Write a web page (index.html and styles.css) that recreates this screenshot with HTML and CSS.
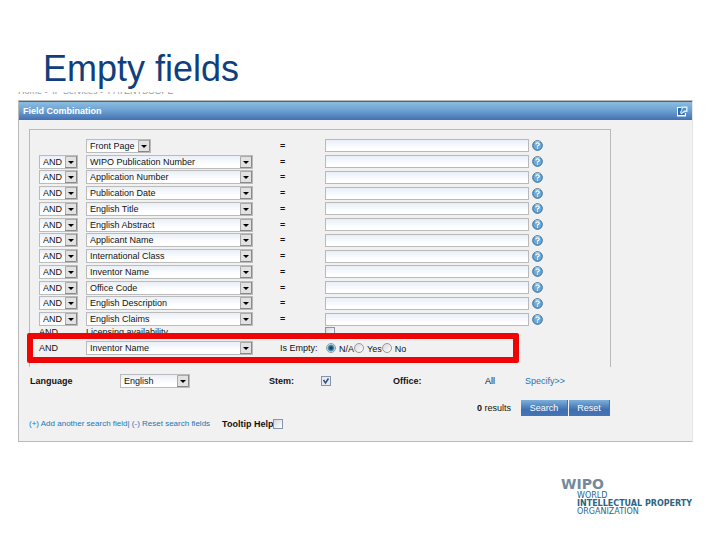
FILE: index.html
```
<!DOCTYPE html>
<html lang="en">
<head>
    <meta charset="utf-8">
    <title>Empty fields</title>
    <link rel="stylesheet" href="styles.css">
</head>
<body>
    <svg width="0" height="0" class="symbols">
        <symbol id="help" viewBox="0 0 11 11">
            <circle cx="5.5" cy="5.5" r="4.8" fill="#6aa9dc" stroke="#34658f"/>
            <path d="M3 2Q5.5 0.8 8 2" stroke="#a9cdec" fill="none"/>
            <path d="M3.7 4.3Q4 2.8 5.5 2.8T7.3 4.2Q7.3 5.2 5.5 6V6.8M5.5 7.6V8.8" stroke="#fff" stroke-width="1.2" fill="none"/>
        </symbol>
    </svg>

    <h1>Empty fields</h1>
    <div class="breadcrumb"><span>Home &gt; IP Services &gt; PATENTSCOPE</span></div>

    <form class="panel">
        <div class="panel-head">
            <h2>Field Combination</h2>
            <svg width="12" height="11" viewBox="0 0 12 11">
                <path d="M1 1H5V2H2V9H9V7H10V10.5H1Z" fill="#fff"/>
                <path d="M2 2H5V5H8V9H2Z" fill="#2f6ca8"/>
                <path d="M5 0.5H11.5V6H9L5 8.5L4 6L6 3Z" fill="#d9ecf8"/>
                <path d="M7 2H10V4.5H8L5.5 7L5.5 5.5Z" fill="#4b93c6"/>
            </svg>
        </div>

        <div class="fields">
            <div class="rows">
                <div class="row">
                    <span></span>
                    <select class="page" aria-label="Field 1"><option>Front Page</option></select>
                    <b>=</b>
                    <input type="text" aria-label="Value 1">
                    <svg class="help"><use href="#help"/></svg>
                </div>
                <div class="row">
                    <select class="op" aria-label="Operator 2"><option>AND</option></select>
                    <select class="field" aria-label="Field 2"><option>WIPO Publication Number</option></select>
                    <b>=</b>
                    <input type="text" aria-label="Value 2">
                    <svg class="help"><use href="#help"/></svg>
                </div>
                <div class="row">
                    <select class="op" aria-label="Operator 3"><option>AND</option></select>
                    <select class="field" aria-label="Field 3"><option>Application Number</option></select>
                    <b>=</b>
                    <input type="text" aria-label="Value 3">
                    <svg class="help"><use href="#help"/></svg>
                </div>
                <div class="row">
                    <select class="op" aria-label="Operator 4"><option>AND</option></select>
                    <select class="field" aria-label="Field 4"><option>Publication Date</option></select>
                    <b>=</b>
                    <input type="text" aria-label="Value 4">
                    <svg class="help"><use href="#help"/></svg>
                </div>
                <div class="row">
                    <select class="op" aria-label="Operator 5"><option>AND</option></select>
                    <select class="field" aria-label="Field 5"><option>English Title</option></select>
                    <b>=</b>
                    <input type="text" aria-label="Value 5">
                    <svg class="help"><use href="#help"/></svg>
                </div>
                <div class="row">
                    <select class="op" aria-label="Operator 6"><option>AND</option></select>
                    <select class="field" aria-label="Field 6"><option>English Abstract</option></select>
                    <b>=</b>
                    <input type="text" aria-label="Value 6">
                    <svg class="help"><use href="#help"/></svg>
                </div>
                <div class="row">
                    <select class="op" aria-label="Operator 7"><option>AND</option></select>
                    <select class="field" aria-label="Field 7"><option>Applicant Name</option></select>
                    <b>=</b>
                    <input type="text" aria-label="Value 7">
                    <svg class="help"><use href="#help"/></svg>
                </div>
                <div class="row">
                    <select class="op" aria-label="Operator 8"><option>AND</option></select>
                    <select class="field" aria-label="Field 8"><option>International Class</option></select>
                    <b>=</b>
                    <input type="text" aria-label="Value 8">
                    <svg class="help"><use href="#help"/></svg>
                </div>
                <div class="row">
                    <select class="op" aria-label="Operator 9"><option>AND</option></select>
                    <select class="field" aria-label="Field 9"><option>Inventor Name</option></select>
                    <b>=</b>
                    <input type="text" aria-label="Value 9">
                    <svg class="help"><use href="#help"/></svg>
                </div>
                <div class="row">
                    <select class="op" aria-label="Operator 10"><option>AND</option></select>
                    <select class="field" aria-label="Field 10"><option>Office Code</option></select>
                    <b>=</b>
                    <input type="text" aria-label="Value 10">
                    <svg class="help"><use href="#help"/></svg>
                </div>
                <div class="row">
                    <select class="op" aria-label="Operator 11"><option>AND</option></select>
                    <select class="field" aria-label="Field 11"><option>English Description</option></select>
                    <b>=</b>
                    <input type="text" aria-label="Value 11">
                    <svg class="help"><use href="#help"/></svg>
                </div>
                <div class="row">
                    <select class="op" aria-label="Operator 12"><option>AND</option></select>
                    <select class="field" aria-label="Field 12"><option>English Claims</option></select>
                    <b>=</b>
                    <input type="text" aria-label="Value 12">
                    <svg class="help"><use href="#help"/></svg>
                </div>
            </div>
            <div class="row licensing">
                <span>AND</span>
                <label for="licensing">Licensing availability</label>
                <span></span>
                <input type="checkbox" id="licensing">
            </div>
            <div class="row highlight">
                <span>AND</span>
                <select class="field" aria-label="Empty field"><option>Inventor Name</option></select>
                <span>Is Empty:</span>
                <div class="radios">
                    <input type="radio" name="empty" id="na" checked><label for="na">N/A</label>
                    <input type="radio" name="empty" id="yes"><label for="yes">Yes</label>
                    <input type="radio" name="empty" id="no"><label for="no">No</label>
                </div>
            </div>
        </div>

        <div class="options">
            <label class="bold" for="language">Language</label>
            <select class="language" id="language"><option>English</option></select>
            <label class="bold" for="stem">Stem:</label>
            <input type="checkbox" id="stem" checked>
            <span class="bold">Office:</span>
            <span>All</span>
            <a href="#">Specify&gt;&gt;</a>
        </div>

        <div class="actions">
            <span><b>0</b> results</span>
            <div class="buttons">
                <button type="button" class="search">Search</button>
                <button type="reset">Reset</button>
            </div>
        </div>

        <div class="links">
            <span><a href="#">(+) Add another search field</a>| <a href="#">(-) Reset search fields</a></span>
            <label class="bold" for="tooltip">Tooltip Help</label>
            <input type="checkbox" id="tooltip">
        </div>
    </form>

    <footer class="logo">
        <strong>WIPO</strong>
        <p>WORLD<br><b>INTELLECTUAL PROPERTY</b><br>ORGANIZATION</p>
    </footer>
</body>
</html>
```
FILE: styles.css
```
* {
    box-sizing: border-box;
}
body {
    margin: 0;
    background: #fff;
    color: #111;
    font: 9px/12px "Liberation Sans", Arial, sans-serif;
}
.symbols {
    position: absolute;
}
h1 {
    margin: 0;
    padding: 49px 43px 0;
    color: #0f3f7d;
    font-size: 36px;
    line-height: 40px;
    font-weight: normal;
}
/* only the foot of the breadcrumb shows under the title */
.breadcrumb {
    display: flex;
    align-items: flex-end;
    height: 3px;
    margin: 3px 18px 5px;
    overflow: hidden;
    color: #999;
    line-height: 8px;
}
.panel {
    margin: 0 27px 0 18px;
    padding-bottom: 11px;
    border: 1px solid #bbb;
    border-right-color: #e4e4e4;
    background: #f1f1f1;
}
.panel-head {
    display: flex;
    align-items: center;
    justify-content: space-between;
    height: 19px;
    padding: 0 4px;
    border-top: 1px solid #39699c;
    background: linear-gradient(#8bbde0, #6a9fd2 50%, #4470b0);
}
h2 {
    margin: 0;
    color: #fff;
    font-size: 9px;
    font-weight: bold;
}
.fields {
    margin: 9px 81px 0 10px;
    padding: 8px 0 4px 9px;
    border: 1px solid #b9b9b9;
    border-bottom: 0;
}
.rows {
    display: grid;
    grid-template-rows: repeat(12, 1fr);
    height: 189px;
}
.row {
    display: grid;
    grid-template-columns: 47px 194px 45px 207px 11px;
    align-items: center;
}
select {
    appearance: none;
    height: 14px;
    margin: 0;
    padding: 0 14px 0 3px;
    border: 1px solid #bbb;
    border-radius: 0;
    color: #111;
    font: 9px/12px "Liberation Sans", Arial, sans-serif;
    background:
        url("data:image/svg+xml,%3Csvg xmlns='http://www.w3.org/2000/svg' width='12' height='12'%3E%3Cpath d='M0 0H12V12H0Z' fill='%23e2e2e2'/%3E%3Cpath d='M.5 12V.5H12' fill='none' stroke='%23aaa'/%3E%3Cpath d='M11.5 0V11.5H0' fill='none' stroke='%23888'/%3E%3Cpath d='M3 5H9L6 8Z' fill='%23000'/%3E%3C/svg%3E") right center no-repeat,
        linear-gradient(#e9eff7, #fff 70%);
}
.op {
    width: 39px;
}
.field {
    width: 167px;
}
.page {
    width: 65px;
}
.language {
    width: 70px;
}
input {
    margin: 0;
}
input[type=text] {
    width: 204px;
    height: 13px;
    padding: 0 2px;
    border: 1px solid #b9b9b9;
    background: linear-gradient(#e9eff7, #fff 80%);
    font: 9px "Liberation Sans", Arial, sans-serif;
}
input[type=checkbox],
input[type=radio] {
    appearance: none;
    width: 10px;
    height: 10px;
    border: 1px solid #8496ac;
    background: linear-gradient(135deg, #d5d8dc, #fff);
}
input[type=radio] {
    border-color: #999;
    border-radius: 50%;
}
input[type=radio]:checked {
    background: radial-gradient(#17405f 0 1px, #4da0c5 3px, #e5eef3 4px);
}
input[type=checkbox]:checked {
    background: url("data:image/svg+xml,%3Csvg xmlns='http://www.w3.org/2000/svg' width='8' height='8'%3E%3Cpath d='M1.5 3L3.5 6L6.5 1.5' fill='none' stroke='%23334a86' stroke-width='1.5'/%3E%3C/svg%3E") center no-repeat #e6eaf0;
}
.help {
    width: 11px;
    height: 11px;
}
.licensing {
    height: 6px;
    align-items: start;
    overflow: hidden;
    line-height: 10px;
}
.highlight {
    position: relative;
    width: 492px;
    height: 30px;
    margin-left: -12px;
    padding-left: 6px;
    border: 6px solid #ee0606;
    border-radius: 2px;
    background: #f1f1f1;
}
.radios {
    display: flex;
    align-items: center;
    padding-left: 1px;
}
.radios label {
    padding: 1px 0 0 3px;
}
.bold {
    font-weight: bold;
}
a {
    color: #1b76b5;
    text-decoration: none;
}
.options {
    display: grid;
    grid-template-columns: 90px 149px 52px 72px 92px 40px 1fr;
    align-items: center;
    padding: 7px 0 0 11px;
}
.actions {
    display: flex;
    align-items: center;
    justify-content: flex-end;
    gap: 10px;
    margin: 12px 82px 0 0;
}
.buttons {
    display: flex;
    gap: 1px;
}
button {
    width: 41px;
    height: 16px;
    padding: 0;
    border: 0;
    border-right: 1px solid #55718f;
    background: linear-gradient(#7cb0da, #3f6fb2 60%, #4674b5);
    color: #fff;
    font: 9px "Liberation Sans", Arial, sans-serif;
}
.search {
    width: 47px;
}
.links {
    display: flex;
    align-items: center;
    padding: 2px 0 0 10px;
    color: #1b76b5;
    font-size: 8px;
}
.links .bold {
    padding-left: 12px;
    color: #111;
    font-size: 9px;
}
.logo {
    width: 159px;
    margin: 34px 0 0 auto;
    color: #2b6584;
    font: 8px/8px "DejaVu Sans", sans-serif;
}
.logo strong {
    color: #75899a;
    font-size: 14px;
    line-height: 16px;
}
.logo p {
    margin: 0 0 0 16px;
}
```
